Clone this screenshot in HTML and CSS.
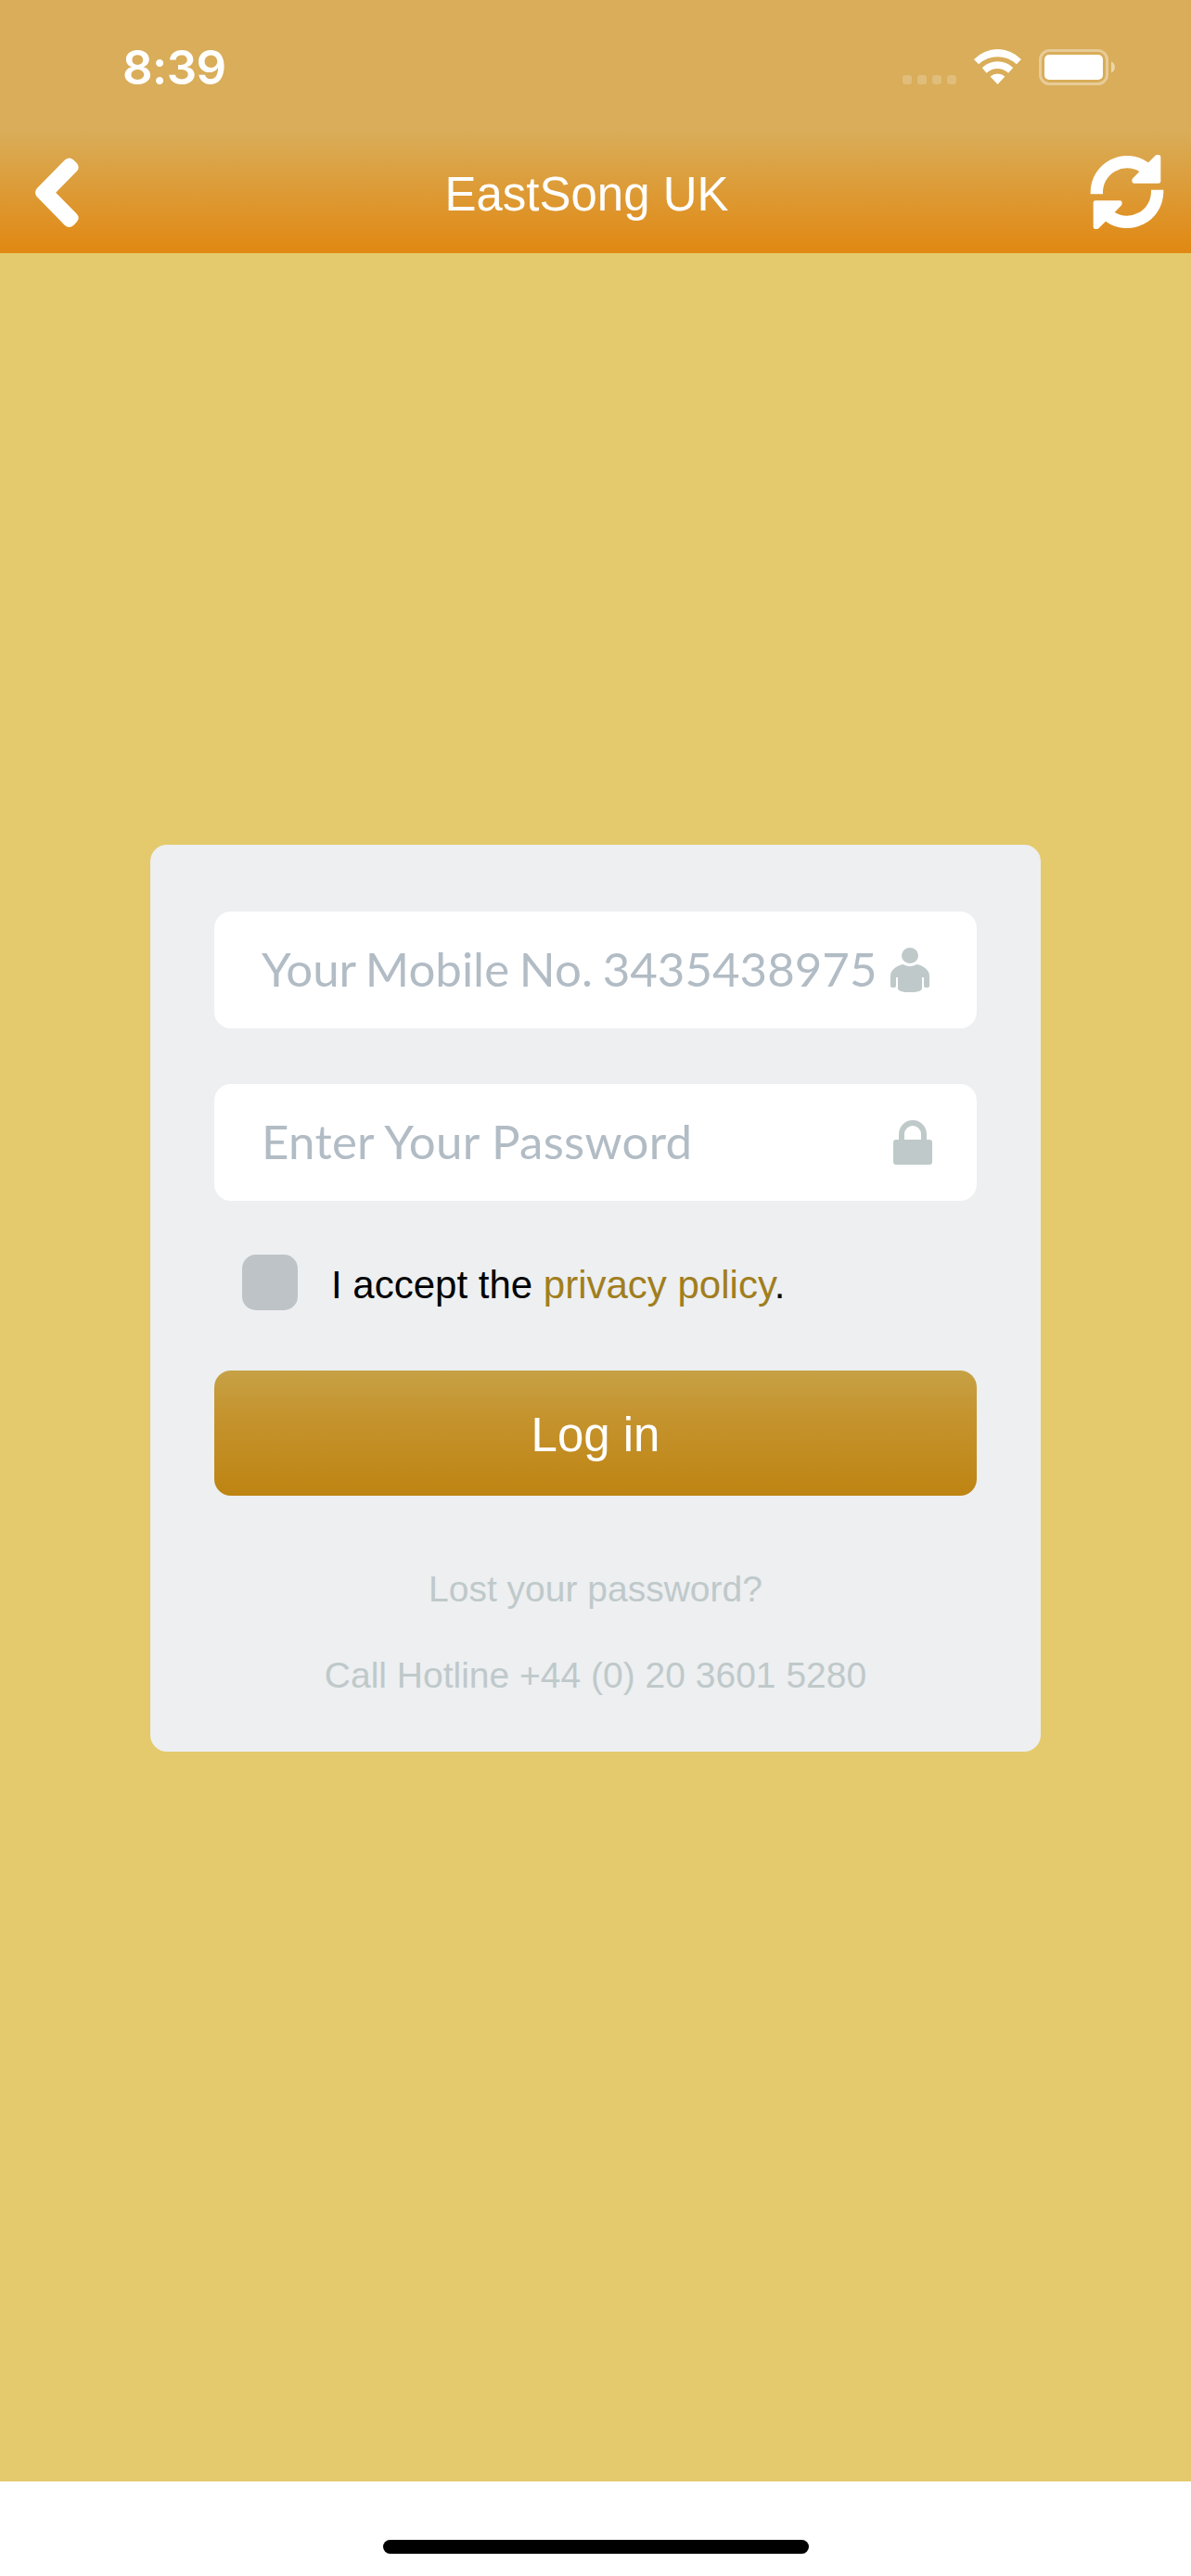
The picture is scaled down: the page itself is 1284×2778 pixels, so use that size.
FILE: index.html
```html
<!DOCTYPE html>
<html lang="en">
<head>
  <meta charset="UTF-8">
  <title>EastSong UK</title>
  <link rel="stylesheet" href="styles.css">
</head>
<body>

<div class="status-bar">
  <span class="time">8:39</span>
  <div class="status-icons">
    <div class="signal"><i></i><i></i><i></i><i></i></div>
    <svg class="wifi" viewBox="301 71 151 112">
      <path d="M301 103A105 105 0 0 1 452 103L437 119A88 88 0 0 0 316 119Z"/>
      <path d="M327 130A71 71 0 0 1 426 130L411 147A51 51 0 0 0 341 147Z"/>
      <path d="M353 158A35 35 0 0 1 400 158L376.500 183Z"/>
    </svg>
    <svg class="battery" viewBox="0 0 82 39">
      <rect class="shell" x="1.500" y="1.500" width="72" height="36" rx="10"/>
      <rect x="6" y="6" width="63" height="27" rx="5"/>
      <path class="cap" d="M78 13.500C83.300 15.500 83.300 23.500 78 25.500Z"/>
    </svg>
  </div>
</div>

<header class="header">
  <svg class="back" viewBox="115 509 140 223">
    <path d="M120 608L210 516Q224 504 238 516L248 526Q260 540 248 553L181 621L248 689Q260 702 248 716L238 726Q224 738 210 726L120 634Q110 621 120 608Z"/>
  </svg>
  <h1>EastSong UK</h1>
  <svg class="refresh" viewBox="676 411 240 240">
    <path id="arrow" d="M678 538V531A118 118 0 0 1 865 436L887 414Q891 410 898 411Q905 411 905 418V497Q905 503 898 503H819Q812 503 812 494Q812 490 815 487L836 465A78 78 0 0 0 718 531V538Z"/>
    <use href="#arrow" transform="rotate(180 796 531)"/>
  </svg>
</header>

<main class="content">
  <form class="login-form">
    <div class="field">
      <input type="text" class="mobile" placeholder="Your Mobile No. 3435438975">
      <svg class="icon user" viewBox="960 366 126 144">
        <ellipse cx="1023" cy="391.500" rx="27" ry="25.500"/>
        <path d="M1001 420Q1023 433 1045 420C1065 423 1086 438 1086 457V490Q1086 495 1081 495H1073Q1068 495 1068 490V462H1062V497C1062 508 1040 510 1023 510C1006 510 984 508 984 497V462H978V490Q978 495 973 495H965Q960 495 960 490V457C960 438 981 423 1001 420Z"/>
      </svg>
    </div>
    <div class="field">
      <input type="password" class="password" placeholder="Enter Your Password">
      <svg class="icon" viewBox="969 924 126 144">
        <rect x="969" y="987" width="126" height="81" rx="9"/>
        <path d="M987 990V969A45 45 0 0 1 1077 969V990H1059V969A27 27 0 0 0 1005 969V990Z"/>
      </svg>
    </div>
    <div class="accept">
      <input type="checkbox" class="checkbox">
      <p>I accept the <a href="#">privacy policy</a>.</p>
    </div>
    <button type="button" class="login-btn">Log in</button>
    <a class="login-link lost" href="#">Lost your password?</a>
    <a class="login-link" href="#">Call Hotline +44 (0) 20 3601 5280</a>
  </form>
</main>

<footer class="home-area">
  <div class="home-bar"></div>
</footer>

</body>
</html>
```
FILE: styles.css
```css
* {
  box-sizing: border-box;
}

body {
  margin: 0;
  height: 2778px;
  display: flex;
  flex-direction: column;
  background: #e4ca6c;
  font-family: "Liberation Sans", Arial, sans-serif;
}

svg {
  display: block;
  fill: white;
}

.status-bar {
  height: 141px;
  padding: 4px 82px 0 132px;
  display: flex;
  justify-content: space-between;
  align-items: center;
  background: #d9ad59;
}

.time {
  color: white;
  font-family: Inter, sans-serif;
  font-size: 51px;
  font-weight: 600;
  letter-spacing: -0.6px;
}

.status-icons {
  display: flex;
  align-items: flex-end;
}

.signal {
  display: flex;
  gap: 6px;
  margin: 0 19px 1px 0;
}

.signal i {
  width: 10px;
  height: 10px;
  border-radius: 3px;
  background: rgba(255, 255, 255, 0.2);
}

.wifi {
  width: 51px;
  height: 38px;
  margin: 0 19px 1px 0;
}

.battery {
  width: 82px;
  height: 39px;
}

.battery .shell {
  fill: none;
  stroke: rgba(255, 255, 255, 0.38);
  stroke-width: 3;
}

.battery .cap {
  fill: rgba(255, 255, 255, 0.5);
}

.header {
  height: 132px;
  padding: 0 29px 0 38px;
  display: flex;
  justify-content: space-between;
  align-items: center;
  background: linear-gradient(to bottom, #d9ad59, #e18812);
}

.header h1 {
  margin: 4px 0 0 5px;
  color: white;
  font-size: 51px;
  font-weight: normal;
}

.back {
  width: 47px;
  height: 75px;
}

.refresh {
  width: 80px;
  height: 80px;
}

.content {
  flex: 1;
  padding-top: 638px;
}

.login-form {
  width: 960px;
  height: 978px;
  margin: 0 auto;
  padding: 72px 69px 0;
  background: #edeff1;
  border-radius: 18px;
}

.field {
  height: 126px;
  margin-bottom: 60px;
  padding: 0 48px 0 51px;
  display: flex;
  align-items: center;
  background: white;
  border-radius: 18px;
}

.field input {
  flex: 1;
  min-width: 0;
  height: 120px;
  padding: 0 0 3px;
  border: none;
  outline: none;
  background: transparent;
  font-family: Lato, sans-serif;
  font-size: 51px;
}

.field .mobile {
  word-spacing: -2.3px;
}

.field .password {
  letter-spacing: 0.3px;
}

.field input::placeholder {
  color: #b2bcc5;
}

.icon {
  width: 42px;
  height: 48px;
  fill: #bfc9ca;
}

.user {
  margin-right: 3px;
}

.accept {
  display: flex;
  gap: 36px;
  margin: -2px 0 59px 30px;
}

.checkbox {
  appearance: none;
  width: 60px;
  height: 60px;
  margin: 0;
  border-radius: 15px;
  background: #bdc3c7;
}

.accept p {
  margin: 0;
  font-size: 42px;
  line-height: 66px;
}

.accept a {
  color: #a17e1e;
  text-decoration: none;
}

.login-btn {
  display: block;
  width: 100%;
  height: 135px;
  padding: 4px 0 0;
  border: none;
  border-radius: 18px;
  background: linear-gradient(to bottom, #c6a145, #c5942f 35%, #be8412);
  color: white;
  font-family: inherit;
  font-size: 51px;
}

.login-link {
  display: block;
  color: #bfc9ca;
  font-size: 39px;
  line-height: 60px;
  text-align: center;
  text-decoration: none;
}

.lost {
  margin: 71px 0 33px;
}

.home-area {
  height: 102px;
  padding-top: 63px;
  background: white;
}

.home-bar {
  width: 459px;
  height: 15px;
  margin: 0 auto;
  border-radius: 8px;
  background: black;
}
```
